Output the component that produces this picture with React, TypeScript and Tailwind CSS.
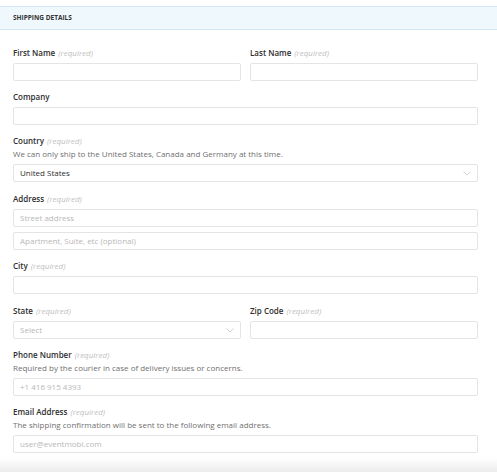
import React from "react";

const font = { fontFamily: '"Open Sans", "Noto Sans", sans-serif' };

function Label({ text, required = true }: { text: string; required?: boolean }) {
  return (
    <div className="text-[8px] leading-[13px] text-[#2e2e2e]">
      <span className="font-semibold">{text}</span>
      {required && <span className="ml-[3px] italic text-[#c0c0c0]">(required)</span>}
    </div>
  );
}

function Helper({ text }: { text: string }) {
  return <div className="text-[8px] leading-[13px] text-[#707070]">{text}</div>;
}

function Input({ placeholder = "" }: { placeholder?: string }) {
  return (
    <div className="flex h-[18px] items-center rounded-[2px] border border-[#e4e4e4] bg-white px-[6px] text-[8px] text-[#b8b8b8]">
      {placeholder}
    </div>
  );
}

function Chevron() {
  return (
    <svg width="8" height="5" viewBox="0 0 8 5" fill="none">
      <path d="M0.5 0.5 L4 4 L7.5 0.5" stroke="#c8c8c8" strokeWidth="0.8" />
    </svg>
  );
}

function Select({ value, placeholder }: { value?: string; placeholder?: string }) {
  return (
    <div className="flex h-[18px] items-center justify-between rounded-[2px] border border-[#e4e4e4] bg-white pl-[6px] pr-[6px] text-[8px]">
      <span className={value ? "text-[#2e2e2e]" : "text-[#b8b8b8]"}>{value ?? placeholder}</span>
      <Chevron />
    </div>
  );
}

function Field({ children, className = "" }: { children: React.ReactNode; className?: string }) {
  return <div className={"flex flex-col " + className}>{children}</div>;
}

export default function App() {
  return (
    <div className="relative h-[472px] w-[497px] overflow-hidden bg-white" style={font}>
      <div className="h-[6px]" />
      <div className="flex h-[24px] items-center border-y border-[#d3e9f8] bg-[#eff8fd] pl-[13px]">
        <span className="text-[6.5px] font-bold text-[#333333]">SHIPPING DETAILS</span>
      </div>
      <div className="flex flex-col pl-[13px] pr-[19px] pt-[16px]">
        <div className="grid grid-cols-2 gap-[9px]">
          <Field>
            <Label text="First Name" />
            <div className="h-[4px]" />
            <Input />
          </Field>
          <Field>
            <Label text="Last Name" />
            <div className="h-[4px]" />
            <Input />
          </Field>
        </div>
        <Field className="mt-[9px]">
          <Label text="Company" required={false} />
          <div className="h-[4px]" />
          <Input />
        </Field>
        <Field className="mt-[9px]">
          <Label text="Country" />
          <Helper text="We can only ship to the United States, Canada and Germany at this time." />
          <div className="h-[4px]" />
          <Select value="United States" />
        </Field>
        <Field className="mt-[10px]">
          <Label text="Address" />
          <div className="h-[4px]" />
          <Input placeholder="Street address" />
          <div className="h-[5px]" />
          <Input placeholder="Apartment, Suite, etc (optional)" />
        </Field>
        <Field className="mt-[9px]">
          <Label text="City" />
          <div className="h-[4px]" />
          <Input />
        </Field>
        <div className="mt-[10px] grid grid-cols-2 gap-[9px]">
          <Field>
            <Label text="State" />
            <div className="h-[4px]" />
            <Select placeholder="Select" />
          </Field>
          <Field>
            <Label text="Zip Code" />
            <div className="h-[4px]" />
            <Input />
          </Field>
        </div>
        <Field className="mt-[9px]">
          <Label text="Phone Number" />
          <Helper text="Required by the courier in case of delivery issues or concerns." />
          <div className="h-[4px]" />
          <Input placeholder="+1 416 915 4393" />
        </Field>
        <Field className="mt-[9px]">
          <Label text="Email Address" />
          <Helper text="The shipping confirmation will be sent to the following email address." />
          <div className="h-[4px]" />
          <Input placeholder="user@eventmobi.com" />
        </Field>
      </div>
      <div className="absolute bottom-0 left-0 h-[14px] w-full bg-gradient-to-b from-white to-[#ececec]" />
    </div>
  );
}
